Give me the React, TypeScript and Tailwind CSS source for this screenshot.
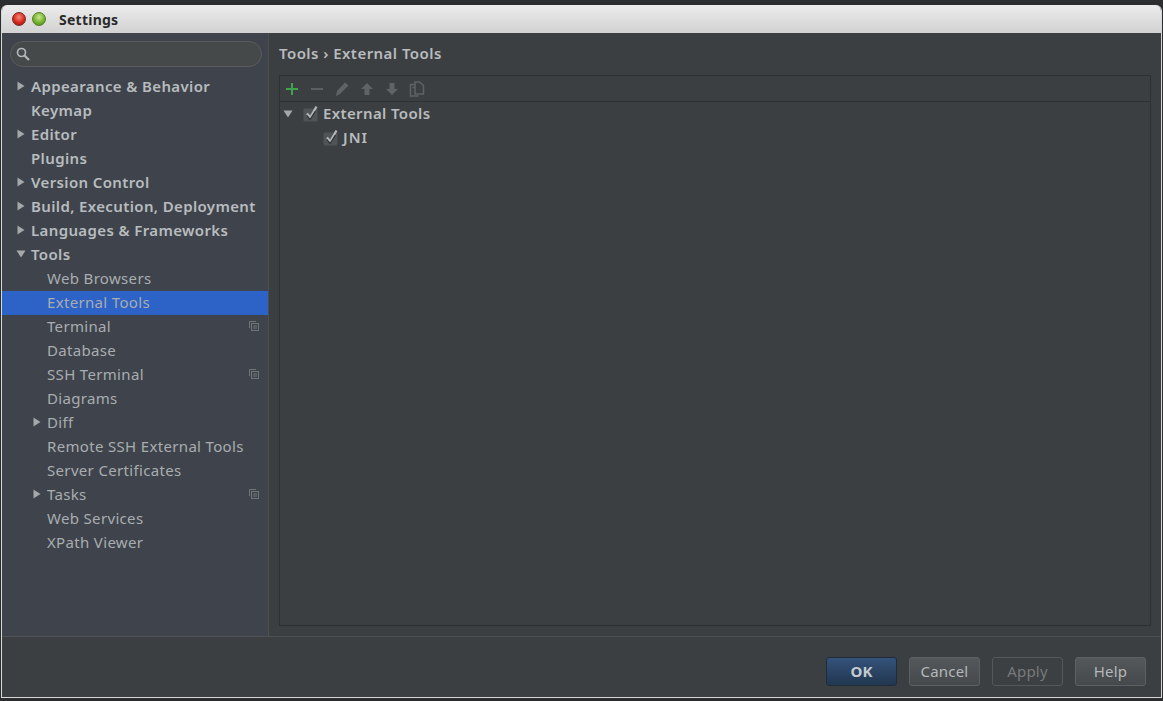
import React from "react";

const font = { fontFamily: '"Noto Sans", sans-serif' };

type Row = { label: string; arrow?: "right" | "down"; level: 0 | 1; selected?: boolean; copy?: boolean };
const rows: Row[] = [
  { label: "Appearance & Behavior", arrow: "right", level: 0 },
  { label: "Keymap", level: 0 },
  { label: "Editor", arrow: "right", level: 0 },
  { label: "Plugins", level: 0 },
  { label: "Version Control", arrow: "right", level: 0 },
  { label: "Build, Execution, Deployment", arrow: "right", level: 0 },
  { label: "Languages & Frameworks", arrow: "right", level: 0 },
  { label: "Tools", arrow: "down", level: 0 },
  { label: "Web Browsers", level: 1 },
  { label: "External Tools", level: 1, selected: true },
  { label: "Terminal", level: 1, copy: true },
  { label: "Database", level: 1 },
  { label: "SSH Terminal", level: 1, copy: true },
  { label: "Diagrams", level: 1 },
  { label: "Diff", arrow: "right", level: 1 },
  { label: "Remote SSH External Tools", level: 1 },
  { label: "Server Certificates", level: 1 },
  { label: "Tasks", arrow: "right", level: 1, copy: true },
  { label: "Web Services", level: 1 },
  { label: "XPath Viewer", level: 1 },
];

function Arrow({ dir, color = "#a4a8aa" }: { dir: "right" | "down"; color?: string }) {
  return (
    <svg width="10" height="10" viewBox="0 0 10 10" className="block">
      {dir === "right" ? <path d="M1.5 0.5 L8.5 5 L1.5 9.5 Z" fill={color} /> : <path d="M0.5 1.5 L9.5 1.5 L5 8.5 Z" fill={color} />}
    </svg>
  );
}

function CopyIcon() {
  return (
    <svg width="10" height="10" viewBox="0 0 10 10" fill="none" stroke="#6f7479" strokeWidth="1" className="block">
      <path d="M0.5 7 V0.5 H7" />
      <rect x="2.5" y="2.5" width="7" height="7" />
      <path d="M4 5 H8 M4 7 H8" />
    </svg>
  );
}

function Check() {
  return (
    <svg width="16" height="17" viewBox="0 0 16 17" fill="none" className="block">
      <rect x="0.5" y="3.5" width="14" height="13" rx="1.5" fill="#515457" stroke="#46494b" />
      <path d="M4 8.5 L7.2 12.5 L13.5 1.5" stroke="#b4b7b9" strokeWidth="2.2" />
      <path d="M4 10.5 L7 14.5 L12.5 6" stroke="#2b2d2f" strokeWidth="1.2" />
    </svg>
  );
}

function Btn({ children, tone }: { children: React.ReactNode; tone: "ok" | "normal" | "disabled" }) {
  const cls =
    tone === "ok"
      ? "bg-gradient-to-b from-[#34527a] to-[#223750] border-[#1f2c3b] text-[#c4ccd2] font-bold"
      : tone === "disabled"
        ? "bg-[#3d4042] border-[#55585a] text-[#777a7c] tracking-[0.2px]"
        : "bg-gradient-to-b from-[#54585a] to-[#46494b] border-[#5e6163] text-[#b4b8ba] tracking-[0.2px]";
  return (
    <div className={`w-[71px] h-[29px] rounded-[3px] border flex items-center justify-center text-[15px] ${cls}`}>{children}</div>
  );
}

export default function App() {
  return (
    <div className="w-[1163px] h-[701px] overflow-hidden bg-[#2b2d2f] pt-[5px] pl-px pr-px pb-[3px] flex" style={font}>
      <div className="flex-1 flex flex-col rounded-t-[6px] overflow-hidden border-x border-b border-[#d8d8d8] min-w-0">
        <div className="h-[28px] shrink-0 bg-gradient-to-b from-[#ececec] to-[#d2d2d2] flex items-center -mx-px pl-[11px]">
          <div className="w-[14px] h-[14px] rounded-full bg-[radial-gradient(circle_at_50%_35%,#f58a7a,#d8281e_55%,#8c1510)] border border-[#7a2a22]" />
          <div className="w-[14px] h-[14px] rounded-full ml-[6px] bg-[radial-gradient(circle_at_50%_35%,#c9e88c,#6fae2a_60%,#4b7c1a)] border border-[#56802a]" />
          <span className="ml-[13px] text-[14px] font-bold text-[#2a2a2a] tracking-[0.25px]">Settings</span>
        </div>
        <div className="flex-1 flex min-h-0 bg-[#3c3f41]">
          <div className="w-[267px] shrink-0 bg-[#3f444c] border-r border-[#4c4e50] flex flex-col">
            <div className="mt-2 ml-2 mr-[6px] h-[26px] rounded-full border border-[#5a5c5c] bg-[#45494a] flex items-center pl-[5px]">
              <svg width="14" height="14" viewBox="0 0 14 14" fill="none" stroke="#b4b7b9" className="block">
                <circle cx="5.5" cy="5.5" r="4" strokeWidth="1.7" />
                <path d="M8.5 8.5 L13 13" strokeWidth="2.2" />
              </svg>
            </div>
            <div className="mt-[8px] flex flex-col">
              {rows.map((r) => (
                <div
                  key={r.label}
                  className={`h-6 relative flex items-center pb-[2px] ${r.selected ? "bg-[#2d62c6]" : ""} ${r.level === 0 ? "pl-[29px] font-semibold text-[#b8bcbf] tracking-[0.37px]" : "pl-[45px] text-[#a9adb0] tracking-[0.33px]"} text-[15px]`}
                >
                  {r.arrow && (
                    <span className={`absolute top-[6px] ${r.level === 0 ? "left-[14px]" : "left-[30px]"}`}>
                      <Arrow dir={r.arrow} />
                    </span>
                  )}
                  <span className="whitespace-nowrap">{r.label}</span>
                  {r.copy && (
                    <span className="absolute right-[9px] top-[6px]">
                      <CopyIcon />
                    </span>
                  )}
                </div>
              ))}
            </div>
          </div>
          <div className="flex-1 min-w-0 flex flex-col pl-[10px] pr-[10px] pb-[10px]">
            <div className="h-[42px] shrink-0 flex items-center pb-[2px] text-[15px] font-semibold text-[#b8bcbf] tracking-[0.45px]">Tools › External Tools</div>
            <div className="flex-1 border border-[#2e3031] flex flex-col min-h-0">
              <div className="h-[26px] shrink-0 border-b border-[#2e3031] flex items-center gap-[9px] pl-[4px]">
                <svg width="16" height="16" viewBox="0 0 16 16" className="block"><path d="M2 8 H14 M8 2 V14" stroke="#3fa34d" strokeWidth="2" /></svg>
                <svg width="16" height="16" viewBox="0 0 16 16" className="block"><path d="M2 8 H14" stroke="#5c6062" strokeWidth="2" /></svg>
                <svg width="16" height="16" viewBox="0 0 16 16" className="block"><path d="M2 15 L3 10 L11 1.5 L14.5 4.5 L6 13 Z" fill="#5f6365" /></svg>
                <svg width="16" height="16" viewBox="0 0 16 16" className="block"><path d="M8 2 L14 8 H10.5 V14 H5.5 V8 H2 Z" fill="#5f6365" /></svg>
                <svg width="16" height="16" viewBox="0 0 16 16" className="block"><path d="M8 14 L14 8 H10.5 V2 H5.5 V8 H2 Z" fill="#5f6365" /></svg>
                <svg width="16" height="16" viewBox="0 0 16 16" fill="none" stroke="#5f6365" strokeWidth="1.5" className="block">
                  <path d="M6 3.5 H1.5 V15 H9.5" /><path d="M6 1 H10.5 L14.5 4.5 V13 H6 Z" /><path d="M3.5 6.5 H6" />
                </svg>
              </div>
              <div className="flex flex-col text-[15px] font-semibold text-[#b8bcbf] tracking-[0.37px]">
                <div className="h-6 flex items-center pl-[3px] pb-[1px]">
                  <Arrow dir="down" />
                  <span className="ml-[10px]"><Check /></span>
                  <span className="ml-[4px]">External Tools</span>
                </div>
                <div className="h-6 flex items-center pl-[43px] pb-[1px]">
                  <Check />
                  <span className="ml-[4px] tracking-[1px]">JNI</span>
                </div>
              </div>
            </div>
          </div>
        </div>
        <div className="h-[61px] shrink-0 bg-[#3c3f41] border-t border-[#4f5153] flex items-center justify-end gap-3 pr-[15px] pt-[8px]">
          <Btn tone="ok">OK</Btn>
          <Btn tone="normal">Cancel</Btn>
          <Btn tone="disabled">Apply</Btn>
          <Btn tone="normal">Help</Btn>
        </div>
      </div>
    </div>
  );
}
